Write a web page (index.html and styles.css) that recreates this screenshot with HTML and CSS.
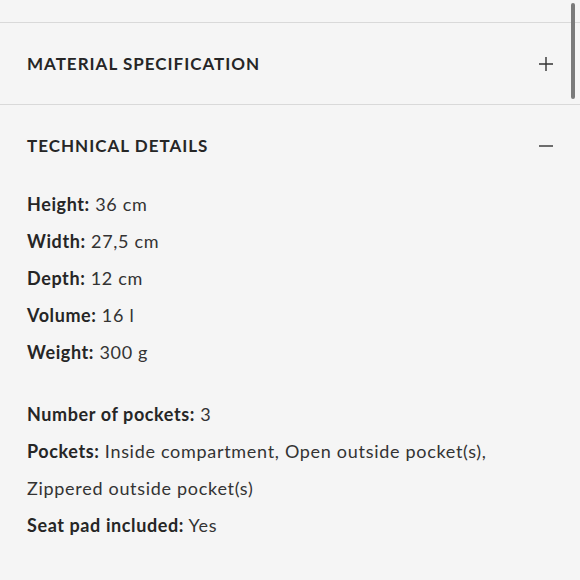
FILE: index.html
```html
<!DOCTYPE html>
<html lang="en">
<head>
  <meta charset="UTF-8" />
  <title>Product details</title>
  <link rel="stylesheet" href="styles.css">
</head>
<body>

<div class="accordion">
  <div class="item">
    <div class="item-head">
      <h3>Material specification</h3>
      <svg class="toggle-icon" width="16" height="16" viewBox="0 0 16 16">
        <path d="M8 1v14M1 8h14" />
      </svg>
    </div>
  </div>

  <div class="item open">
    <div class="item-head">
      <h3>Technical details</h3>
      <svg class="toggle-icon" width="16" height="16" viewBox="0 0 16 16">
        <path d="M1 8h14" />
      </svg>
    </div>
    <div class="item-body">
      <ul class="specs">
        <li><b>Height:</b> 36 cm</li>
        <li><b>Width:</b> 27,5 cm</li>
        <li><b>Depth:</b> 12 cm</li>
        <li><b>Volume:</b> 16 l</li>
        <li><b>Weight:</b> 300 g</li>
      </ul>
      <ul class="specs">
        <li><b>Number of pockets:</b> 3</li>
        <li><b>Pockets:</b> Inside compartment, Open outside pocket(s), Zippered outside pocket(s)</li>
        <li><b>Seat pad included:</b> Yes</li>
      </ul>
    </div>
  </div>
</div>

<div class="scrollbar"></div>

</body>
</html>
```

FILE: styles.css
```css
body {
  margin: 0;
  background: #f5f5f5;
  color: #222;
  font-family: Lato, "Noto Sans", sans-serif;
}
.accordion {
  padding-top: 22px;
}
.item {
  border-top: 1px solid #d9d9d9;
}
.item-head {
  height: 81px;
  display: flex;
  align-items: center;
  justify-content: space-between;
  padding: 0 27px;
}
.item-head h3 {
  margin: 0;
  font-size: 17px;
  font-weight: 700;
  text-transform: uppercase;
  letter-spacing: 1px;
  color: #262626;
}
.toggle-icon {
  margin-right: -1px;
}
.toggle-icon path {
  stroke: #333;
  stroke-width: 1.4;
  fill: none;
}
.item-body {
  padding: 0 27px 30px;
}
.specs {
  list-style: none;
  margin: 0 0 25px;
  padding: 0;
}
.specs li {
  font-size: 18px;
  line-height: 37px;
  font-weight: 400;
  color: #333;
  letter-spacing: 0.7px;
}
.specs b {
  font-weight: 700;
  color: #262626;
  letter-spacing: 0.6px;
}
.scrollbar {
  position: fixed;
  top: 3px;
  right: 5px;
  width: 4px;
  height: 96px;
  border-radius: 2px;
  background: #7b7b7b;
}
```
